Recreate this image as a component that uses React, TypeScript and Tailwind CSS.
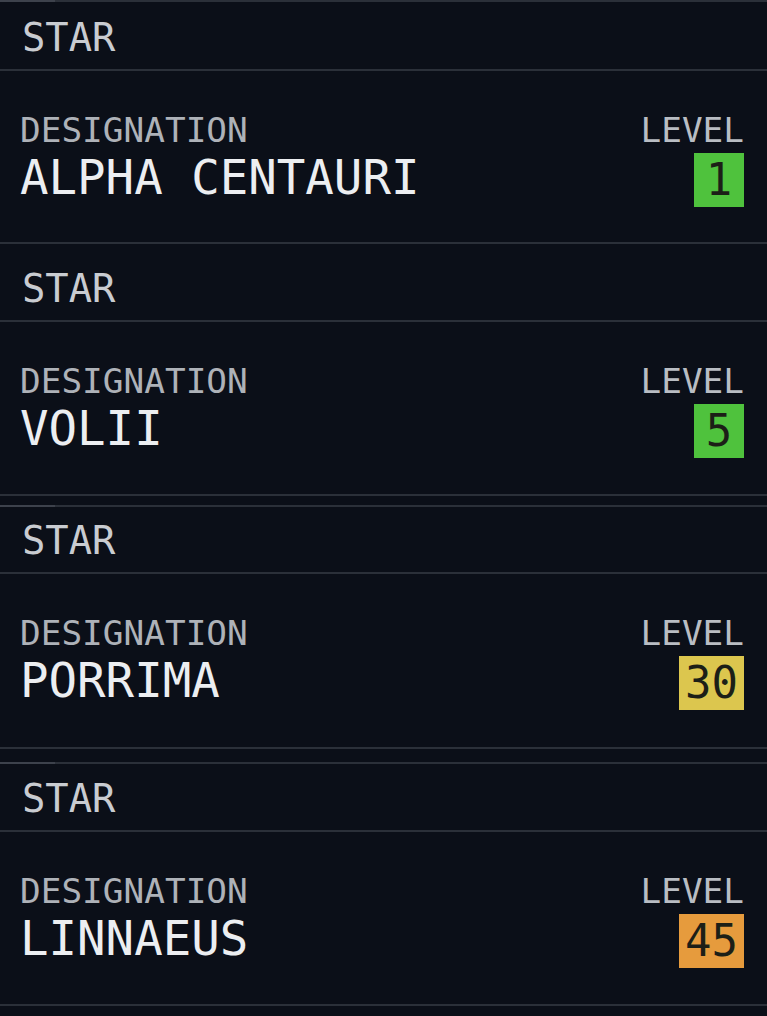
import React from 'react';

type Star = {
  name: string;
  level: number;
  badge: string;
  header: string;
  body: string;
  topBorder: boolean;
  gap: string;
};

const stars: Star[] = [
  { name: 'ALPHA CENTAURI', level: 1, badge: 'bg-[#4fc23d]', header: 'h-[67px]', body: 'h-[171px]', topBorder: true, gap: '' },
  { name: 'VOLII', level: 5, badge: 'bg-[#4fc23d]', header: 'h-[76px]', body: 'h-[172px]', topBorder: false, gap: '' },
  { name: 'PORRIMA', level: 30, badge: 'bg-[#dcc64e]', header: 'h-[65px]', body: 'h-[173px]', topBorder: true, gap: 'mt-[9px]' },
  { name: 'LINNAEUS', level: 45, badge: 'bg-[#e69b3d]', header: 'h-[66px]', body: 'h-[172px]', topBorder: true, gap: 'mt-[13px]' },
];

function Line({ highlight }: { highlight?: boolean }) {
  return (
    <div className="h-[2px] w-full bg-[#2b3039] flex">
      {highlight && <div className="h-full w-[55px] bg-[#3d424c]" />}
    </div>
  );
}

function StarRow({ star }: { star: Star }) {
  return (
    <div className={star.gap}>
      {star.topBorder && <Line highlight />}
      <div className={`${star.header} flex items-end px-[22px] pb-[11px]`}>
        <span className="text-[38.8px] leading-none text-[#c9ccd1]">STAR</span>
      </div>
      <Line />
      <div className={`${star.body} flex justify-between pl-[20px] pr-[23px] pt-[42px]`}>
        <div className="flex flex-col">
          <span className="text-[34.4px] leading-none text-[#aeb2b8]">DESIGNATION</span>
          <span className="mt-[7px] text-[47.4px] leading-none text-[#eceef1]">{star.name}</span>
        </div>
        <div className="flex flex-col items-end">
          <span className="text-[34.4px] leading-none text-[#b9bdc3]">LEVEL</span>
          <span
            className={`${star.badge} mt-[6px] min-w-[50px] h-[54px] px-[6px] text-center text-[44px] leading-[54px] text-[#1c1f17]`}
          >
            {star.level}
          </span>
        </div>
      </div>
      <Line />
    </div>
  );
}

export default function App() {
  return (
    <div
      className="w-[767px] h-[1016px] overflow-hidden bg-[#0b0f18]"
      style={{ fontFamily: '"DejaVu Sans Mono", monospace' }}
    >
      {stars.map((s) => (
        <StarRow key={s.name} star={s} />
      ))}
    </div>
  );
}
